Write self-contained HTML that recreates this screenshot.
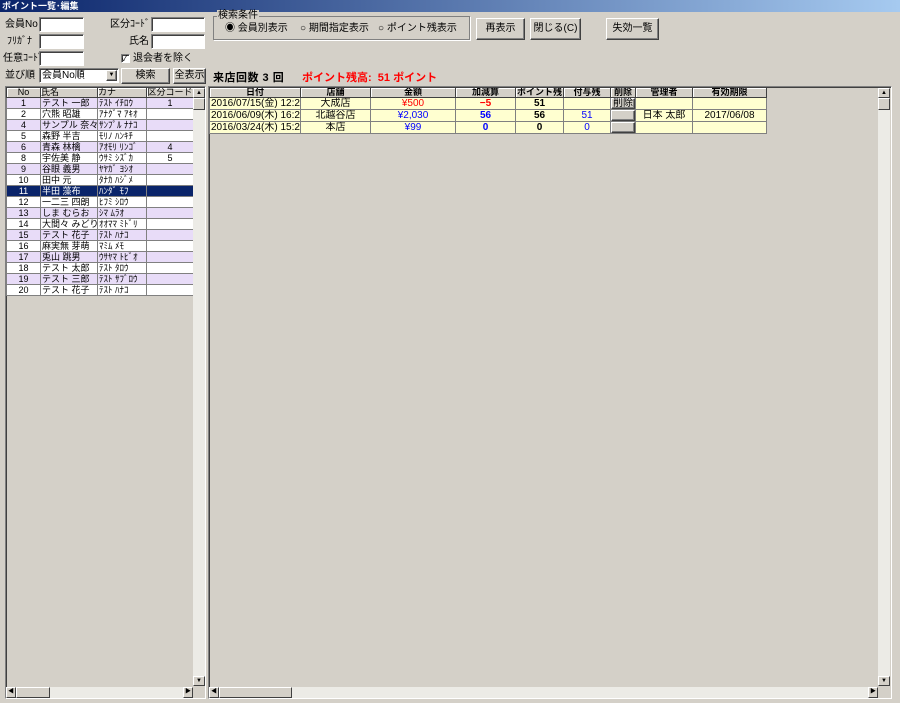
<!DOCTYPE html><html><head><meta charset="utf-8"><style>
*{box-sizing:border-box;margin:0;padding:0}
body{width:900px;height:703px;background:#d4d0c8;font-family:"Liberation Sans","Noto Sans CJK JP",sans-serif;font-size:10px;color:#000;position:relative;overflow:hidden}
.a{position:absolute}
.title{left:0;top:0;width:900px;height:12px;background:linear-gradient(90deg,#0a246a,#a6caf0);color:#fff;font-weight:bold;font-size:9px;line-height:12px;padding-left:2px}
.inp{background:#fff;border:1px solid;border-color:#808080 #fff #fff #808080;box-shadow:inset 1px 1px 0 #404040}
.btn{background:#d4d0c8;border:1px solid;border-color:#fff #404040 #404040 #fff;box-shadow:inset -1px -1px 0 #808080;text-align:center;font-size:10px}
.lbl{font-size:10px;line-height:12px}
.grid{border:1px solid;border-color:#808080 #fff #fff #808080;box-shadow:inset 1px 1px 0 #404040}
table{border-collapse:collapse;position:absolute;table-layout:fixed}
td{border:1px solid #808080;height:11px;font-size:9px;line-height:9px;white-space:nowrap;overflow:hidden;padding:0 1px}
th{border:1px solid #404040;background:#d4d0c8;font-size:9px;height:10px;line-height:9px;font-weight:normal;box-shadow:inset 1px 1px 0 #fff;overflow:hidden;white-space:nowrap}
.rt th{font-weight:bold}
.p td{background:#e8dcf8}.w td{background:#fff}.s td{background:#0a246a;color:#fff}
.rt td{background:#ffffd0;height:12px;font-size:10px;line-height:10px}
.c{text-align:center}
.sb{background:#ecebe6}
.sbb{background:#d4d0c8;border:1px solid;border-color:#fff #404040 #404040 #fff;font-size:6px;text-align:center;line-height:9px}
</style></head><body>
<div class="a title">ポイント一覧･編集</div>
<div class="a lbl" style="left:5px;top:19px">会員No</div><div class="a inp" style="left:39px;top:17px;width:45px;height:15px"></div>
<div class="a lbl" style="left:110px;top:19px">区分ｺｰﾄﾞ</div><div class="a inp" style="left:151px;top:17px;width:54px;height:15px"></div>
<div class="a lbl" style="left:7px;top:36px">ﾌﾘｶﾞﾅ</div><div class="a inp" style="left:39px;top:34px;width:45px;height:15px"></div>
<div class="a lbl" style="left:129px;top:36px">氏名</div><div class="a inp" style="left:151px;top:34px;width:54px;height:15px"></div>
<div class="a lbl" style="left:3px;top:53px">任意ｺｰﾄﾞ</div><div class="a inp" style="left:39px;top:51px;width:45px;height:15px"></div>
<div class="a inp" style="left:121px;top:54px;width:9px;height:9px;font-size:8px;line-height:7px">✓</div><div class="a lbl" style="left:133px;top:53px">退会者を除く</div>
<div class="a lbl" style="left:5px;top:70px">並び順</div>
<div class="a inp" style="left:39px;top:68px;width:80px;height:15px;padding-left:2px;line-height:13px">会員No順<div class="a btn" style="right:1px;top:1px;width:11px;height:11px;font-size:6px;line-height:9px">▼</div></div>
<div class="a btn" style="left:121px;top:68px;width:49px;height:16px;line-height:14px">検索</div>
<div class="a btn" style="left:173px;top:68px;width:33px;height:16px;line-height:14px">全表示</div>
<div class="a" style="left:213px;top:16px;width:257px;height:24px;border:1px solid #808080;box-shadow:1px 1px 0 #fff"></div>
<div class="a lbl" style="left:217px;top:10px;background:#d4d0c8;padding:0 1px">検索条件</div>
<div class="a lbl" style="left:225px;top:23px">◉ 会員別表示</div>
<div class="a lbl" style="left:300px;top:23px">○ 期間指定表示</div>
<div class="a lbl" style="left:378px;top:23px">○ ポイント残表示</div>
<div class="a btn" style="left:476px;top:18px;width:49px;height:22px;line-height:20px">再表示</div>
<div class="a btn" style="left:530px;top:18px;width:51px;height:22px;line-height:20px">閉じる(C)</div>
<div class="a btn" style="left:606px;top:18px;width:53px;height:22px;line-height:20px">失効一覧</div>
<div class="a" style="left:213px;top:69px;font-size:11px;font-weight:bold;letter-spacing:0.5px">来店回数 3 回</div>
<div class="a" style="left:302px;top:69px;font-size:11px;font-weight:bold;color:#f00">ポイント残高:&nbsp; 51 ポイント</div>

<div class="a grid" style="left:5px;top:86px;width:201px;height:613px"></div>
<table style="left:6px;top:87px;width:187px">
<colgroup><col style="width:34px"><col style="width:57px"><col style="width:49px"><col style="width:47px"></colgroup>
<tr><th>No</th><th style="text-align:left">氏名</th><th style="text-align:left">カナ</th><th>区分コード</th></tr>
<tr class="p"><td class="c">1</td><td>テスト 一郎</td><td>ﾃｽﾄ ｲﾁﾛｳ</td><td class="c">1</td></tr>
<tr class="w"><td class="c">2</td><td>穴熊 昭雄</td><td>ｱﾅｸﾞﾏ ｱｷｵ</td><td></td></tr>
<tr class="p"><td class="c">4</td><td>サンプル 奈々子</td><td>ｻﾝﾌﾟﾙ ﾅﾅｺ</td><td></td></tr>
<tr class="w"><td class="c">5</td><td>森野 半吉</td><td>ﾓﾘﾉ ﾊﾝｷﾁ</td><td></td></tr>
<tr class="p"><td class="c">6</td><td>青森 林檎</td><td>ｱｵﾓﾘ ﾘﾝｺﾞ</td><td class="c">4</td></tr>
<tr class="w"><td class="c">8</td><td>宇佐美 静</td><td>ｳｻﾐ ｼｽﾞｶ</td><td class="c">5</td></tr>
<tr class="p"><td class="c">9</td><td>谷眼 義男</td><td>ﾔﾔｶﾞ ﾖｼｵ</td><td></td></tr>
<tr class="w"><td class="c">10</td><td>田中 元</td><td>ﾀﾅｶ ﾊｼﾞﾒ</td><td></td></tr>
<tr class="s"><td class="c">11</td><td>半田 藻布</td><td>ﾊﾝﾀﾞ ﾓﾌ</td><td></td></tr>
<tr class="w"><td class="c">12</td><td>一二三 四朗</td><td>ﾋﾌﾐ ｼﾛｳ</td><td></td></tr>
<tr class="p"><td class="c">13</td><td>しま むらお</td><td>ｼﾏ ﾑﾗｵ</td><td></td></tr>
<tr class="w"><td class="c">14</td><td>大間々 みどり</td><td>ｵｵﾏﾏ ﾐﾄﾞﾘ</td><td></td></tr>
<tr class="p"><td class="c">15</td><td>テスト 花子</td><td>ﾃｽﾄ ﾊﾅｺ</td><td></td></tr>
<tr class="w"><td class="c">16</td><td>麻実無 芽萌</td><td>ﾏﾐﾑ ﾒﾓ</td><td></td></tr>
<tr class="p"><td class="c">17</td><td>兎山 跳男</td><td>ｳｻﾔﾏ ﾄﾋﾞｵ</td><td></td></tr>
<tr class="w"><td class="c">18</td><td>テスト 太郎</td><td>ﾃｽﾄ ﾀﾛｳ</td><td></td></tr>
<tr class="p"><td class="c">19</td><td>テスト 三郎</td><td>ﾃｽﾄ ｻﾌﾞﾛｳ</td><td></td></tr>
<tr class="w"><td class="c">20</td><td>テスト 花子</td><td>ﾃｽﾄ ﾊﾅｺ</td><td></td></tr>
</table>
<div class="a sb" style="left:193px;top:88px;width:12px;height:598px"></div>
<div class="a sbb" style="left:193px;top:88px;width:12px;height:10px">▲</div>
<div class="a sbb" style="left:193px;top:98px;width:12px;height:12px"></div>
<div class="a sbb" style="left:193px;top:676px;width:12px;height:10px">▼</div>
<div class="a sb" style="left:6px;top:687px;width:187px;height:11px"></div>
<div class="a sbb" style="left:6px;top:687px;width:10px;height:11px">◀</div>
<div class="a sbb" style="left:16px;top:687px;width:34px;height:11px"></div>
<div class="a sbb" style="left:183px;top:687px;width:10px;height:11px">▶</div>

<div class="a grid" style="left:208px;top:86px;width:684px;height:613px"></div>
<table class="rt" style="left:209px;top:87px;width:557px">
<colgroup><col style="width:91px"><col style="width:70px"><col style="width:85px"><col style="width:60px"><col style="width:48px"><col style="width:47px"><col style="width:25px"><col style="width:57px"><col style="width:74px"></colgroup>
<tr><th>日付</th><th>店舗</th><th>金額</th><th>加減算</th><th>ポイント残</th><th>付与残</th><th>削除</th><th>管理者</th><th>有効期限</th></tr>
<tr><td>2016/07/15(金) 12:28:26</td><td class="c">大成店</td><td class="c" style="color:#f00">¥500</td><td class="c" style="color:#f00;font-weight:bold">−5</td><td class="c" style="font-weight:bold">51</td><td></td><td style="background:#d4d0c8;padding:0"><div class="btn" style="height:11px;line-height:9px">削除</div></td><td></td><td></td></tr>
<tr><td>2016/06/09(木) 16:25:31</td><td class="c">北越谷店</td><td class="c" style="color:#00f">¥2,030</td><td class="c" style="color:#00f;font-weight:bold">56</td><td class="c" style="font-weight:bold">56</td><td class="c" style="color:#00f">51</td><td style="background:#d4d0c8;padding:0"><div class="btn" style="height:11px"></div></td><td class="c">日本 太郎</td><td class="c">2017/06/08</td></tr>
<tr><td>2016/03/24(木) 15:22:14</td><td class="c">本店</td><td class="c" style="color:#00f">¥99</td><td class="c" style="color:#00f;font-weight:bold">0</td><td class="c" style="font-weight:bold">0</td><td class="c" style="color:#00f">0</td><td style="background:#d4d0c8;padding:0"><div class="btn" style="height:11px"></div></td><td></td><td></td></tr>
</table>
<div class="a sb" style="left:878px;top:88px;width:12px;height:598px"></div>
<div class="a sbb" style="left:878px;top:88px;width:12px;height:10px">▲</div>
<div class="a sbb" style="left:878px;top:98px;width:12px;height:12px"></div>
<div class="a sbb" style="left:878px;top:676px;width:12px;height:10px">▼</div>
<div class="a sb" style="left:209px;top:687px;width:669px;height:11px"></div>
<div class="a sbb" style="left:209px;top:687px;width:10px;height:11px">◀</div>
<div class="a sbb" style="left:219px;top:687px;width:73px;height:11px"></div>
<div class="a sbb" style="left:868px;top:687px;width:10px;height:11px">▶</div>
</body></html>
